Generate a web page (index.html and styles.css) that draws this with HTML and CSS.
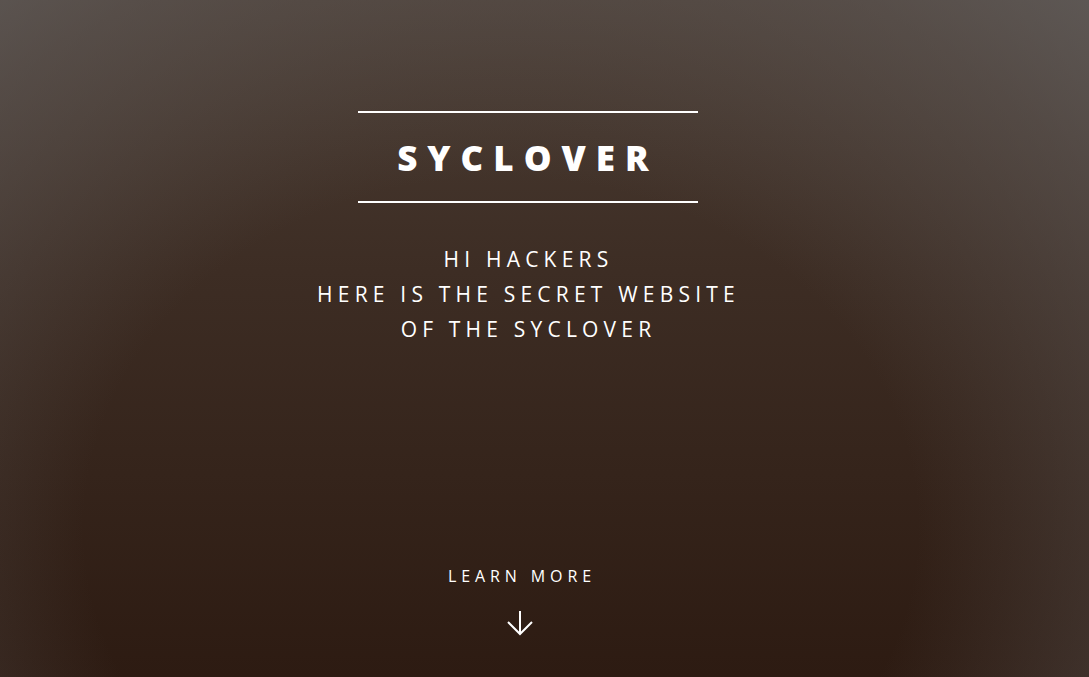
FILE: index.html
```html
<!DOCTYPE html>
<html lang="en">
<head>
<meta charset="utf-8">
<title>Syclover</title>
<link rel="stylesheet" href="styles.css">
</head>
<body>
<section class="banner">
  <div class="banner-inner">
    <h2 class="title">Syclover</h2>
    <p class="lead">Hi hackers<br>Here is the secret website<br>of the Syclover</p>
  </div>
  <a class="more" href="#one">
    <span class="more-label">Learn More</span>
    <svg class="more-arrow" width="28" height="26" viewBox="0 0 28 26" aria-hidden="true">
      <path d="M14 1 V24 M2 12 L14 24 L26 12" fill="none" stroke="#fff" stroke-width="2"/>
    </svg>
  </a>
</section>
</body>
</html>
```
FILE: styles.css
```css
html, body {
  margin: 0;
  padding: 0;
  height: 100%;
}

body {
  font-family: "Open Sans", "Liberation Sans", sans-serif;
  color: #fff;
  background: #2e1c13;
  overflow: hidden;
}

.banner {
  box-sizing: border-box;
  height: 677px;
  display: flex;
  flex-direction: column;
  align-items: center;
  padding: 111px 33px 0 0;
  background:
    radial-gradient(ellipse 85% 115% at 46% 78%, rgba(98, 94, 93, 0) 45%, rgba(98, 94, 93, 0.5) 78%, rgba(100, 97, 96, 0.85) 100%),
    linear-gradient(180deg, #4b3d34 0%, #3d2d24 40%, #2d1b12 100%);
}

.banner-inner {
  display: flex;
  flex-direction: column;
  align-items: center;
}

.title {
  box-sizing: border-box;
  width: 340px;
  margin: 0;
  padding: 26px 0 24px 0;
  border-top: 2px solid #fff;
  border-bottom: 2px solid #fff;
  font-size: 35px;
  line-height: 38px;
  font-weight: 800;
  letter-spacing: 10px;
  text-transform: uppercase;
  text-align: center;
}

.lead {
  margin: 39px 0 0;
  padding-left: 1px;
  font-size: 21px;
  line-height: 35px;
  letter-spacing: 5.2px;
  text-transform: uppercase;
  text-align: center;
}

.more {
  margin-top: auto;
  margin-right: 17px;
  margin-bottom: 41px;
  display: flex;
  flex-direction: column;
  align-items: center;
  color: #fff;
  text-decoration: none;
}

.more-label {
  font-size: 16px;
  line-height: 22px;
  letter-spacing: 4.9px;
  padding-left: 4.9px;
  text-transform: uppercase;
}

.more-arrow {
  display: block;
  margin-top: 23px;
  margin-right: 0;
}
```
